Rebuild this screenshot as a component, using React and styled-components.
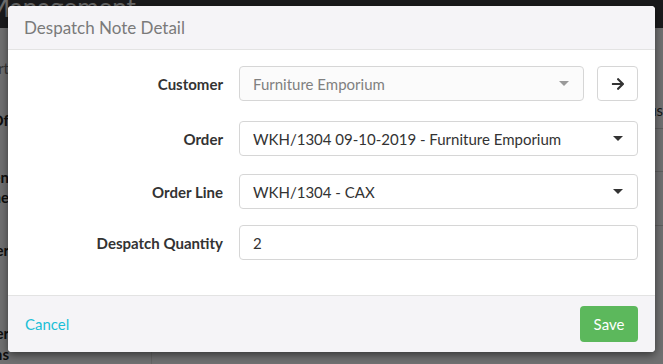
import React from 'react';
import styled, { createGlobalStyle } from 'styled-components';
import { FaArrowRight } from 'react-icons/fa';

const GlobalStyle = createGlobalStyle`
    html, body {
        margin: 0;
        padding: 0;
        width: 663px;
        height: 364px;
        overflow: hidden;
        font-family: Lato, "Open Sans", sans-serif;
    }
`;

const Page = styled.div`
    position: relative;
    width: 663px;
    height: 364px;
    background: #f4f4f6;
    overflow: hidden;
`;

const NavBar = styled.div`
    height: 28px;
    background: #3a3a3e;
    color: #e8e8e8;
    font-size: 26px;
    line-height: 14px;
    margin-left: -14px;
    overflow: hidden;
    white-space: nowrap;
`;

const PageBody = styled.div`
    display: flex;
    height: 336px;
`;

const SideBar = styled.div`
    width: 184px;
    border-right: 1px solid #ddd;
    position: relative;
`;

// words of the page behind, only their last letters peek out left of the modal
const SideWord = styled.div`
    width: 9px;
    display: flex;
    justify-content: flex-end;
    white-space: nowrap;
    font-size: 15px;
    font-weight: ${p => (p.$bold ? 700 : 400)};
    color: ${p => (p.$bold ? '#222' : '#777')};
    margin-top: ${p => p.$top}px;
    line-height: 18px;
`;

const SideRule = styled.div`
    margin: 0 14px 0 19px;
    border-top: 1px solid #333;
`;

const MainText = styled.div`
    flex: 1;
    display: flex;
    flex-direction: column;
    padding-top: 64px;
`;

const MainLine = styled.div`
    height: ${p => p.$h}px;
    border-bottom: 1px solid #ccc;
    font-size: 15px;
    color: #333;
    padding-left: 472px;
    display: flex;
    align-items: center;
    white-space: nowrap;
`;

const Backdrop = styled.div`
    position: absolute;
    inset: 0;
    background: rgba(0, 0, 0, 0.54);
    display: flex;
    align-items: flex-start;
    justify-content: center;
`;

const Modal = styled.div`
    margin-top: 6px;
    width: 647px;
    background: #fff;
    border-radius: 4px;
    box-shadow: 0 3px 9px rgba(0, 0, 0, 0.5);
    overflow: hidden;
`;

const Header = styled.div`
    height: 44px;
    box-sizing: border-box;
    background: #f5f4f7;
    border-bottom: 1px solid #e3e3e3;
    padding: 0 16px;
    display: flex;
    align-items: center;
`;

const Title = styled.h4`
    margin: 0;
    font-size: 17px;
    font-weight: 400;
    color: #7a7a7a;
`;

const Body = styled.div`
    padding: 16px 17px 35px 16px;
    display: flex;
    flex-direction: column;
`;

const Row = styled.div`
    display: grid;
    grid-template-columns: 199px 1fr;
    column-gap: 16px;
    align-items: center;
    margin-top: ${p => p.$space || 0}px;
`;

const Label = styled.label`
    text-align: right;
    font-size: 15px;
    font-weight: 700;
    color: #333;
`;

const Controls = styled.div`
    display: flex;
    gap: 13px;
`;

const Field = styled.div`
    flex: 1;
    height: 35px;
    box-sizing: border-box;
    border: 1px solid #d6d6d6;
    border-radius: 4px;
    background: ${p => (p.$disabled ? '#fbfbfb' : '#fff')};
    color: ${p => (p.$disabled ? '#808080' : '#333')};
    font-size: 15px;
    display: flex;
    align-items: center;
    justify-content: space-between;
    padding: 0 14px 0 13px;
`;

const Caret = styled.span`
    width: 0;
    height: 0;
    border-left: 5px solid transparent;
    border-right: 5px solid transparent;
    border-top: 5px solid ${p => (p.$disabled ? '#9a9a9a' : '#333')};
`;

const IconButton = styled.button`
    width: 41px;
    height: 35px;
    border: 1px solid #d6d6d6;
    border-radius: 4px;
    background: #fff;
    color: #333;
    display: flex;
    align-items: center;
    justify-content: center;
    padding: 0;
`;

const Footer = styled.div`
    height: 57px;
    box-sizing: border-box;
    background: #f5f4f7;
    border-top: 1px solid #e3e3e3;
    padding: 0 17px;
    display: flex;
    align-items: center;
    justify-content: space-between;
`;

const LinkButton = styled.button`
    border: none;
    background: none;
    padding: 0;
    font-family: inherit;
    font-size: 15px;
    color: #1bbfd6;
`;

const SaveButton = styled.button`
    width: 58px;
    height: 36px;
    border: none;
    border-radius: 4px;
    background: #5cb85c;
    color: #fff;
    font-family: inherit;
    font-size: 15px;
`;

const Select = ({ value, disabled }) => (
    <Field $disabled={disabled}>
        <span>{value}</span>
        <Caret $disabled={disabled} />
    </Field>
);

export default function App() {
    return (
        <Page>
            <GlobalStyle />
            <NavBar>Management</NavBar>
            <PageBody>
                <SideBar>
                    <SideWord $top={31}>Report</SideWord>
                    <SideWord $top={34} $bold>Of</SideWord>
                    <SideWord $top={39} $bold>Open</SideWord>
                    <SideWord $top={2} $bold>Name</SideWord>
                    <SideWord $top={35} $bold>Order</SideWord>
                    <SideWord $top={65} $bold>Other</SideWord>
                    <SideRule />
                    <SideWord $top={2} $bold>Items</SideWord>
                </SideBar>
                <MainText>
                    <MainLine $h={36}>status</MainLine>
                    <MainLine $h={42} />
                    <MainLine $h={53}>ur</MainLine>
                </MainText>
            </PageBody>
            <Backdrop>
                <Modal>
                    <Header>
                        <Title>Despatch Note Detail</Title>
                    </Header>
                    <Body>
                        <Row>
                            <Label>Customer</Label>
                            <Controls>
                                <Select value="Furniture Emporium" disabled />
                                <IconButton>
                                    <FaArrowRight size={14} />
                                </IconButton>
                            </Controls>
                        </Row>
                        <Row $space={20}>
                            <Label>Order</Label>
                            <Select value="WKH/1304 09-10-2019 - Furniture Emporium" />
                        </Row>
                        <Row $space={18}>
                            <Label>Order Line</Label>
                            <Select value="WKH/1304 - CAX" />
                        </Row>
                        <Row $space={16}>
                            <Label>Despatch Quantity</Label>
                            <Field>
                                <span>2</span>
                            </Field>
                        </Row>
                    </Body>
                    <Footer>
                        <LinkButton>Cancel</LinkButton>
                        <SaveButton>Save</SaveButton>
                    </Footer>
                </Modal>
            </Backdrop>
        </Page>
    );
}
